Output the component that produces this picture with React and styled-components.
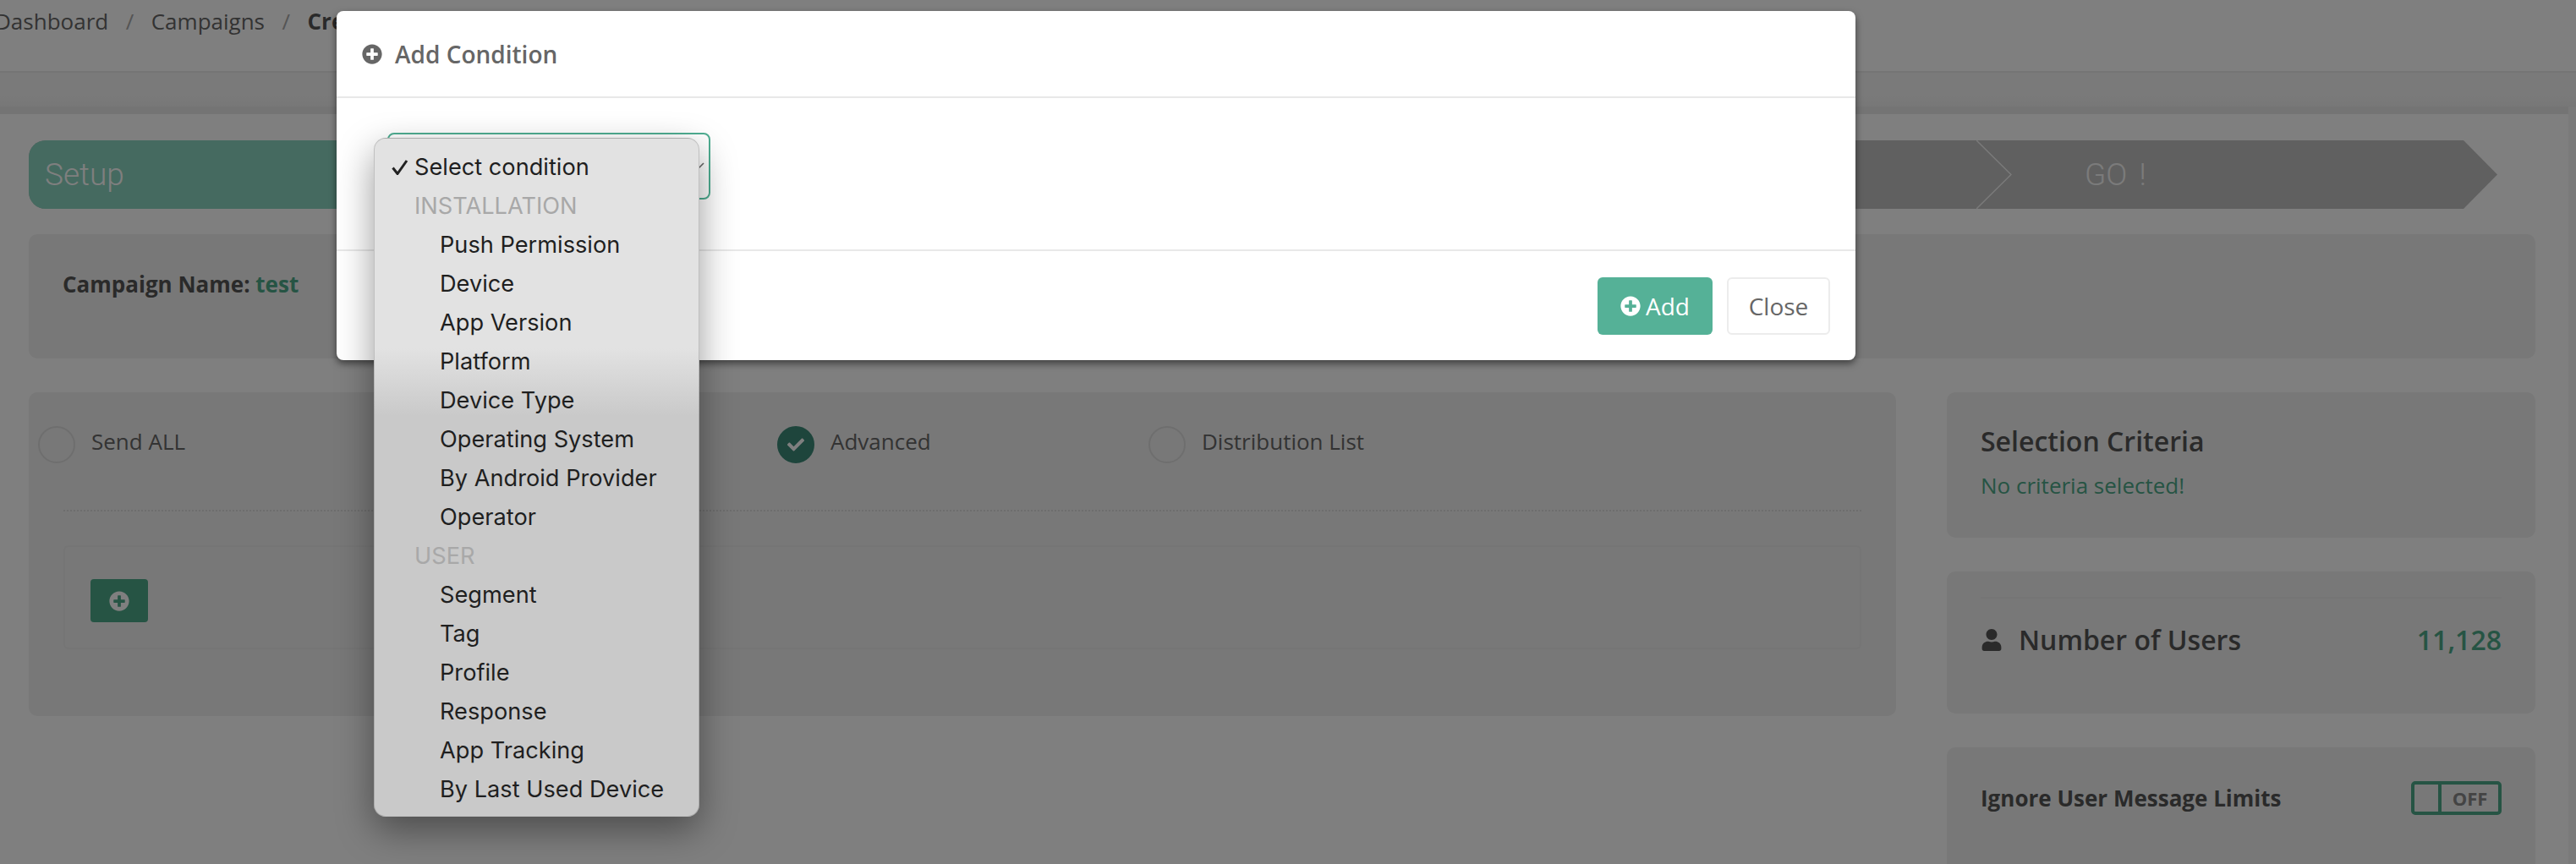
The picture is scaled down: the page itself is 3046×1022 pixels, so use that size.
import styled, { createGlobalStyle } from "styled-components";
import { FaPlusCircle, FaUser, FaCheck } from "react-icons/fa";

const installation = [
  "Push Permission",
  "Device",
  "App Version",
  "Platform",
  "Device Type",
  "Operating System",
  "By Android Provider",
  "Operator",
];
const user = ["Segment", "Tag", "Profile", "Response", "App Tracking", "By Last Used Device"];

const App = () => (
  <Page>
    <GlobalStyle />
    <TopBar>
      <Crumb>Dashboard</Crumb>
      <Slash>/</Slash>
      <Crumb>Campaigns</Crumb>
      <Slash>/</Slash>
      <Crumb $current>Create Campaign</Crumb>
    </TopBar>
    <Band />
    <Main>
      <Strip />
      <Content>
        <Steps>
          <Step $active>Setup</Step>
          <Step $last>GO !</Step>
          <StepDivider viewBox="0 0 42 81">
            <path d="M0 0 L41 40.5 L0 81" fill="none" stroke="#f4f4f4" strokeWidth="1.5" />
          </StepDivider>
        </Steps>
        <NameCard>
          <NameLabel>
            Campaign Name: <Green>test</Green>
          </NameLabel>
        </NameCard>
        <Columns>
          <MainPanel>
            <Radios>
              <Radio>
                <Circle />
                Send ALL
              </Radio>
              <Radio>
                <Circle $checked>
                  <FaCheck />
                </Circle>
                Advanced
              </Radio>
              <Radio>
                <Circle />
                Distribution List
              </Radio>
            </Radios>
            <Dotted />
            <ConditionBox>
              <SmallAdd>
                <FaPlusCircle />
              </SmallAdd>
            </ConditionBox>
          </MainPanel>
          <Sidebar>
            <CriteriaCard>
              <CardTitle>Selection Criteria</CardTitle>
              <NoCriteria>No criteria selected!</NoCriteria>
            </CriteriaCard>
            <UsersCard>
              <UsersRow>
                <UsersLabel>
                  <FaUser />
                  Number of Users
                </UsersLabel>
                <UsersCount>11,128</UsersCount>
              </UsersRow>
            </UsersCard>
            <LimitsCard>
              <LimitsLabel>Ignore User Message Limits</LimitsLabel>
              <Toggle>
                <ToggleKnob />
                <ToggleText>OFF</ToggleText>
              </Toggle>
            </LimitsCard>
          </Sidebar>
        </Columns>
      </Content>
    </Main>
    <Backdrop />
    <Modal>
      <ModalHeader>
        <FaPlusCircle />
        Add Condition
      </ModalHeader>
      <ModalBody>
        <SelectBox>
          <svg width="10" height="10" viewBox="0 0 10 10">
            <path d="M1 8 L8 1" stroke="#666" strokeWidth="1.6" fill="none" />
          </svg>
        </SelectBox>
      </ModalBody>
      <ModalFooter>
        <AddButton>
          <FaPlusCircle />
          Add
        </AddButton>
        <CloseButton>Close</CloseButton>
      </ModalFooter>
    </Modal>
    <Menu>
      <MenuItem $selected>
        <MenuCheck viewBox="0 0 20 18">
          <path d="M1.5 9.5 L7 16.5 L18 1" fill="none" stroke="#222" strokeWidth="3" />
        </MenuCheck>
        Select condition
      </MenuItem>
      <MenuGroup>INSTALLATION</MenuGroup>
      {installation.map((label) => (
        <MenuItem key={label}>{label}</MenuItem>
      ))}
      <MenuGroup>USER</MenuGroup>
      {user.map((label) => (
        <MenuItem key={label}>{label}</MenuItem>
      ))}
    </Menu>
  </Page>
);

const GlobalStyle = createGlobalStyle`
  html, body {
    margin: 0;
    padding: 0;
    background: #fff;
    overflow: hidden;
  }
  * {
    box-sizing: border-box;
  }
`;

const Page = styled.div`
  position: relative;
  width: 3046px;
  height: 1022px;
  overflow: hidden;
  background: #f4f4f4;
  font-family: "Open Sans", "Liberation Sans", sans-serif;
  color: #555;
`;

const TopBar = styled.div`
  display: flex;
  align-items: center;
  height: 86px;
  padding: 0 0 34px 0;
  margin-left: -6px;
  border-bottom: 2px solid #ebebeb;
  background: #fff;
  font-size: 26px;
`;

const Crumb = styled.span`
  font-weight: ${(p) => (p.$current ? 700 : 400)};
  color: ${(p) => (p.$current ? "#555" : "#666")};
  white-space: nowrap;
`;

const Slash = styled.span`
  margin: 0 20.5px;
  color: #aaa;
`;

const Band = styled.div`
  height: 40px;
  background: linear-gradient(#f4f4f4 70%, #efefef);
`;

const Main = styled.div`
  width: 3037px;
  height: 896px;
  background: #fff;
`;

const Strip = styled.div`
  height: 9px;
  background: #e9e9e9;
`;

const Content = styled.div`
  padding: 31px 39px 0 34px;
`;

const Steps = styled.div`
  position: relative;
  display: flex;
  width: 2919px;
  height: 81px;
  background: #c0c0c0;
  border-radius: 20px 0 0 20px;
  clip-path: polygon(0 0, 2879px 0, 100% 50%, 2879px 100%, 0 100%);
`;

const Step = styled.div`
  display: flex;
  align-items: center;
  height: 100%;
  font-family: Roboto, "Liberation Sans", sans-serif;
  font-weight: 300;
  font-size: 37px;
  word-spacing: 5px;
  color: ${(p) => (p.$active ? "#fff" : "#f6f6f6")};
  background: ${(p) => (p.$active ? "#8ad4c0" : "transparent")};
  padding-left: ${(p) => (p.$active ? "19px" : "2031px")};
  width: ${(p) => (p.$active ? "400px" : "auto")};
  border-radius: ${(p) => (p.$active ? "20px 0 0 20px" : "0")};
`;

const StepDivider = styled.svg`
  position: absolute;
  top: 0;
  left: 2303px;
  width: 42px;
  height: 81px;
`;

const NameCard = styled.div`
  height: 147px;
  margin-top: 30px;
  padding: 41px 40px;
  background: #f0f0f0;
  border-radius: 10px;
`;

const NameLabel = styled.div`
  font-size: 26px;
  font-weight: 700;
  line-height: 36px;
  color: #555;
`;

const Green = styled.span`
  color: #4da888;
`;

const Columns = styled.div`
  display: flex;
  align-items: flex-start;
  gap: 60px;
  margin-top: 40px;
`;

const MainPanel = styled.div`
  width: 2208px;
  height: 383px;
  padding: 40px 41px 0;
  background: #f0f0f0;
  border-radius: 10px;
`;

const Radios = styled.div`
  display: grid;
  grid-template-columns: 874px 439px auto;
  margin-left: -30px;
`;

const Radio = styled.div`
  display: flex;
  align-items: flex-start;
  gap: 19px;
  height: 44px;
  font-size: 26px;
  line-height: 36px;
  color: #666;
`;

const Circle = styled.span`
  display: flex;
  align-items: center;
  justify-content: center;
  width: 44px;
  height: 44px;
  border-radius: 50%;
  border: 2px solid ${(p) => (p.$checked ? "#3c8a78" : "#ddd")};
  background: ${(p) => (p.$checked ? "#3c8a78" : "transparent")};
  color: #fff;
  font-size: 20px;
`;

const Dotted = styled.div`
  margin-top: 55px;
  border-top: 2px dotted #dadada;
`;

const ConditionBox = styled.div`
  display: flex;
  align-items: center;
  height: 123px;
  margin-top: 40px;
  padding: 8px 0 0 30px;
  border: 2px solid #eaeaea;
  border-radius: 6px;
`;

const SmallAdd = styled.div`
  display: flex;
  align-items: center;
  justify-content: center;
  width: 68px;
  height: 51px;
  border-radius: 4px;
  background: #4da888;
  color: #fff;
  font-size: 24px;
`;

const Sidebar = styled.div`
  display: flex;
  flex-direction: column;
  gap: 40px;
  width: 696px;
`;

const Card = styled.div`
  background: #f0f0f0;
  border-radius: 10px;
  padding: 0 40px;
`;

const CriteriaCard = styled(Card)`
  height: 172px;
  padding-top: 36px;
`;

const CardTitle = styled.div`
  font-size: 32px;
  font-weight: 600;
  line-height: 44px;
  color: #555;
`;

const NoCriteria = styled.div`
  margin-top: 12px;
  font-size: 26px;
  line-height: 36px;
  color: #4da888;
`;

const UsersCard = styled(Card)`
  height: 168px;
  padding-top: 30px;
`;

const UsersRow = styled.div`
  display: flex;
  align-items: center;
  justify-content: space-between;
  padding-top: 27px;
  border-top: 2px solid #ebebeb;
`;

const UsersLabel = styled.div`
  display: flex;
  align-items: center;
  gap: 19px;
  font-size: 32px;
  font-weight: 600;
  line-height: 44px;
  color: #555;
  svg {
    font-size: 26px;
  }
`;

const UsersCount = styled.div`
  font-size: 32px;
  font-weight: 600;
  line-height: 44px;
  color: #4da888;
`;

const LimitsCard = styled(Card)`
  display: flex;
  align-items: center;
  justify-content: space-between;
  height: 164px;
  padding-bottom: 44px;
`;

const LimitsLabel = styled.div`
  font-size: 26px;
  font-weight: 700;
  line-height: 36px;
  color: #555;
`;

const Toggle = styled.div`
  display: flex;
  width: 107px;
  height: 40px;
  border: 4px solid #4da888;
  border-radius: 5px;
`;

const ToggleKnob = styled.div`
  width: 32px;
  border-right: 4px solid #4da888;
`;

const ToggleText = styled.div`
  flex: 1;
  text-align: center;
  font-size: 22px;
  font-weight: 700;
  line-height: 32px;
  color: #888;
`;

const Backdrop = styled.div`
  position: absolute;
  inset: 0;
  background: rgba(0, 0, 0, 0.5);
`;

const Modal = styled.div`
  position: absolute;
  top: 13px;
  left: 398px;
  width: 1796px;
  height: 413px;
  display: flex;
  flex-direction: column;
  background: #fff;
  border-radius: 8px;
  box-shadow: 0 4px 9px rgba(0, 0, 0, 0.5);
`;

const ModalHeader = styled.div`
  display: flex;
  align-items: center;
  gap: 15px;
  height: 103px;
  padding: 0 0 0 30px;
  border-bottom: 2px solid #e8e8e8;
  font-size: 28px;
  font-weight: 600;
  color: #666;
  svg {
    font-size: 24px;
  }
`;

const ModalBody = styled.div`
  height: 181px;
  padding: 41px 0 0 60px;
  border-bottom: 2px solid #e8e8e8;
`;

const SelectBox = styled.div`
  display: flex;
  align-items: center;
  justify-content: flex-end;
  width: 382px;
  height: 79px;
  padding-right: 4px;
  border: 2px solid #4fae92;
  border-radius: 8px;
`;

const ModalFooter = styled.div`
  display: flex;
  align-items: center;
  justify-content: flex-end;
  gap: 17px;
  flex: 1;
  padding: 0 30px 0 0;
`;

const AddButton = styled.div`
  display: flex;
  align-items: center;
  justify-content: center;
  gap: 6px;
  width: 136px;
  height: 68px;
  border-radius: 6px;
  background: #55b197;
  color: #fff;
  font-size: 28px;
  svg {
    font-size: 24px;
  }
`;

const CloseButton = styled.div`
  display: flex;
  align-items: center;
  justify-content: center;
  width: 122px;
  height: 68px;
  border: 2px solid #ececec;
  border-radius: 6px;
  background: #fff;
  color: #666;
  font-size: 28px;
`;

const Menu = styled.div`
  position: absolute;
  top: 163px;
  left: 442px;
  width: 385px;
  height: 803px;
  padding: 11px 0;
  border: 1px solid rgba(0, 0, 0, 0.15);
  border-radius: 14px;
  background: linear-gradient(#e2e2e2 0 31%, #c9c9c9 41%, #c9c9c9 100%);
  box-shadow: 0 16px 44px rgba(0, 0, 0, 0.4);
  font-family: Inter, "Liberation Sans", sans-serif;
  font-size: 27.2px;
`;

const MenuItem = styled.div`
  position: relative;
  height: 46px;
  line-height: 46px;
  padding-left: ${(p) => (p.$selected ? "47px" : "77px")};
  color: #1f1f1f;
  white-space: nowrap;
`;

const MenuCheck = styled.svg`
  position: absolute;
  left: 20px;
  top: 14px;
  width: 20px;
  height: 18px;
`;

const MenuGroup = styled.div`
  height: 46px;
  line-height: 46px;
  padding-left: 47px;
  color: #a8a8a8;
`;

export default App;
